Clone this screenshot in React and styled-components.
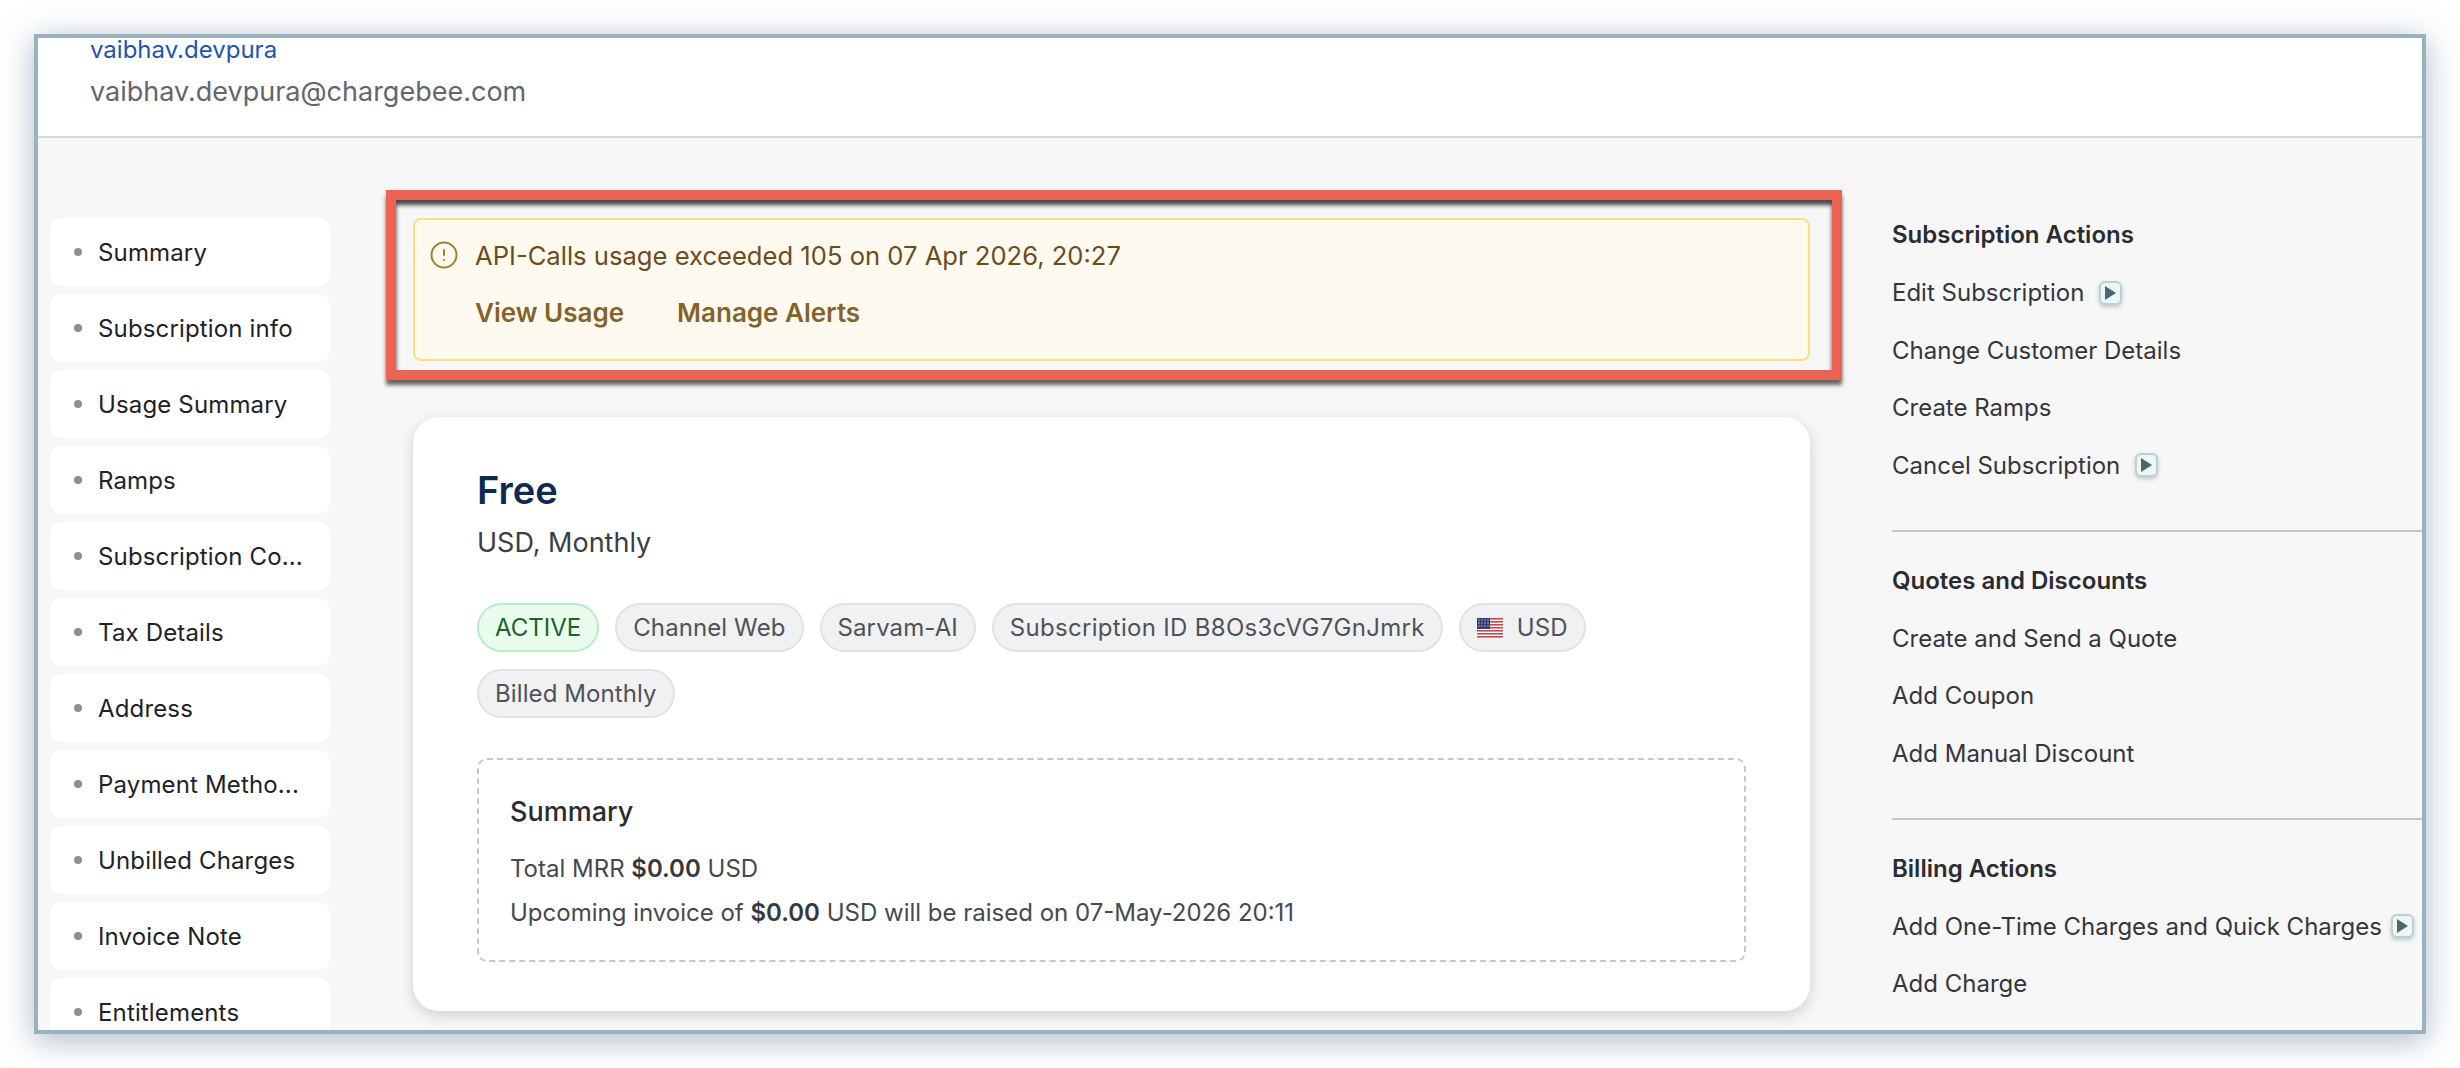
import React from 'react'
import styled, { createGlobalStyle } from 'styled-components'
import { CircleAlert } from 'lucide-react'

const Global = createGlobalStyle`
  html, body {
    margin: 0;
    background: #fff;
    font-family: Inter, "Noto Sans", sans-serif;
  }
  * { box-sizing: border-box; }
`

const Page = styled.div`
  width: 2460px;
  height: 1068px;
  padding: 34px;
  overflow: hidden;
`

const Frame = styled.div`
  width: 2392px;
  height: 1000px;
  border: 4px solid #9ab2c0;
  background: #f7f7f7;
  box-shadow: 0 6px 30px rgba(90, 120, 140, 0.5);
  overflow: hidden;
  display: flex;
  flex-direction: column;
`

const Header = styled.header`
  height: 100px;
  flex: none;
  background: #fff;
  border-bottom: 2px solid #d6d6d6;
  padding: 0 0 0 52px;
`

const UserName = styled.div`
  color: #1f55ab;
  font-size: 24px;
  line-height: 24px;
`

const Email = styled.div`
  color: #63666c;
  font-size: 27px;
  line-height: 32px;
  margin-top: 14px;
`

const Body = styled.div`
  flex: 1;
  min-height: 0;
  display: flex;
`

const Sidebar = styled.nav`
  width: 292px;
  flex: none;
  padding: 80px 0 0 12px;
  display: flex;
  flex-direction: column;
  gap: 8px;
`

const NavItem = styled.div`
  width: 280px;
  height: 68px;
  flex: none;
  background: #fff;
  border-radius: 12px;
  display: flex;
  align-items: center;
  padding-left: 24px;
  gap: 16px;
  font-size: 24px;
  letter-spacing: 0.15px;
  color: #202228;
  &::before {
    content: '';
    width: 8px;
    height: 8px;
    border-radius: 50%;
    background: #8d8f95;
  }
`

const Main = styled.main`
  width: 1480px;
  flex: none;
  padding: 80px 0 0 83px;
  display: flex;
  flex-direction: column;
  gap: 56px;
`

const Highlight = styled.div`
  position: relative;
  width: 1397px;
  flex: none;
`

const RedBox = styled.div`
  position: absolute;
  left: -27px;
  top: -28px;
  width: 1456px;
  height: 190px;
  border: 10px solid #ec6354;
  box-shadow: 0 5px 4px rgba(0, 0, 0, 0.6), inset 0 5px 4px rgba(0, 0, 0, 0.72);
`

const Alert = styled.div`
  height: 143px;
  background: #fefaef;
  border: 2px solid #fcdf7c;
  border-radius: 8px;
  padding: 17px 14px;
`

const AlertRow = styled.div`
  display: flex;
  align-items: center;
  gap: 16px;
  height: 36px;
  color: #6d4c1b;
  font-size: 25.6px;
  svg { color: #a07f2e; flex: none; }
`

const AlertLinks = styled.div`
  display: flex;
  gap: 53px;
  margin: 22px 0 0 46px;
  color: #84622a;
  font-size: 26px;
  font-weight: 600;
  line-height: 36px;
`

const Card = styled.section`
  width: 1397px;
  height: 594px;
  flex: none;
  background: #fff;
  border-radius: 26px;
  box-shadow: 0 4px 14px rgba(70, 70, 90, 0.22);
  padding: 49px 64px 0;
`

const Title = styled.h1`
  margin: 0;
  color: #0f2a4f;
  font-size: 38px;
  font-weight: 600;
  line-height: 48px;
`

const SubTitle = styled.div`
  margin-top: 11px;
  color: #3b3e44;
  font-size: 27px;
  line-height: 36px;
`

const Chips = styled.div`
  display: flex;
  flex-wrap: wrap;
  gap: 17px 16px;
  margin-top: 42px;
`

const Chip = styled.span`
  display: inline-flex;
  align-items: center;
  gap: 14px;
  height: 49px;
  padding: 0 16px;
  border-radius: 25px;
  font-size: 24px;
  letter-spacing: ${p => (p.$wide ? '0.3px' : p.$active ? '0' : '0.1px')};
  border: 2px solid ${p => (p.$active ? '#b5efc4' : '#e1e2e6')};
  background: ${p => (p.$active ? '#e9fcee' : '#f0f1f3')};
  color: ${p => (p.$active ? '#1f6128' : '#505257')};
`

const SummaryBox = styled.div`
  height: 204px;
  margin-top: 40px;
  border: 2px dashed #c6c6cc;
  border-radius: 10px;
  padding: 34px 31px 0;
`

const SummaryTitle = styled.div`
  color: #2a2c32;
  font-size: 27px;
  font-weight: 500;
  line-height: 36px;
  margin-bottom: 17px;
`

const SummaryLine = styled.div`
  color: #46484e;
  font-size: 24px;
  line-height: 44px;
  b { font-weight: 600; color: #36383e; }
`

const Aside = styled.aside`
  flex: 1;
  min-width: 0;
  padding: 72px 0 0 82px;
`

const Group = styled.div`
  padding-bottom: 35.5px;
  margin-bottom: 24px;
  border-bottom: ${p => (p.$last ? 'none' : '2px solid #c4c4ca')};
`

const GroupTitle = styled.div`
  color: #2a2c32;
  font-size: 24px;
  font-weight: 600;
  line-height: 50px;
  margin-bottom: 4px;
`

const Action = styled.div`
  display: flex;
  align-items: center;
  gap: ${p => (p.$tight ? '9px' : '15px')};
  color: #34363c;
  font-size: 24px;
  height: 57.5px;
  white-space: nowrap;
`

const PlayButton = styled.span`
  width: 23px;
  height: 24px;
  flex: none;
  display: inline-flex;
  align-items: center;
  justify-content: center;
  background: #eef5f5;
  border: 2px solid #bcd0d3;
  border-radius: 6px;
  box-shadow: 0 2px 4px rgba(60, 90, 100, 0.3);
`

const Play = () => (
  <PlayButton>
    <svg width="11" height="14" viewBox="0 0 11 14">
      <path d="M0 0 L11 7 L0 14 Z" fill="#456a70" />
    </svg>
  </PlayButton>
)

const Flag = () => (
  <svg width="26" height="20" viewBox="0 0 26 20">
    <rect width="26" height="20" fill="#fff" />
    {[0, 3, 6, 9, 12, 15, 18].map(y => (
      <rect key={y} y={y} width="26" height="1.6" fill="#bf4a50" />
    ))}
    <rect width="13" height="11" fill="#2f3f78" />
    {[2, 5, 8, 11].map(x =>
      [2, 5, 8].map(y => <circle key={`${x}-${y}`} cx={x} cy={y} r="0.7" fill="#c9cfe4" />)
    )}
  </svg>
)

const navItems = [
  'Summary', 'Subscription info', 'Usage Summary', 'Ramps', 'Subscription Co...', 'Tax Details',
  'Address', 'Payment Metho...', 'Unbilled Charges', 'Invoice Note', 'Entitlements',
]

const groups = [
  {
    title: 'Subscription Actions',
    items: [['Edit Subscription', true], ['Change Customer Details'], ['Create Ramps'], ['Cancel Subscription', true]],
  },
  {
    title: 'Quotes and Discounts',
    items: [['Create and Send a Quote'], ['Add Coupon'], ['Add Manual Discount']],
  },
  {
    title: 'Billing Actions',
    last: true,
    items: [['Add One-Time Charges and Quick Charges', true, true], ['Add Charge']],
  },
]

export default function App() {
  return (
    <Page>
      <Global />
      <Frame>
        <Header>
          <UserName>vaibhav.devpura</UserName>
          <Email>vaibhav.devpura@chargebee.com</Email>
        </Header>
        <Body>
          <Sidebar>
            {navItems.map(item => <NavItem key={item}>{item}</NavItem>)}
          </Sidebar>
          <Main>
            <Highlight>
              <RedBox />
              <Alert>
                <AlertRow>
                  <CircleAlert size={30} strokeWidth={1.6} />
                  API-Calls usage exceeded 105 on 07 Apr 2026, 20:27
                </AlertRow>
                <AlertLinks>
                  <span>View Usage</span>
                  <span>Manage Alerts</span>
                </AlertLinks>
              </Alert>
            </Highlight>
            <Card>
              <Title>Free</Title>
              <SubTitle>USD, Monthly</SubTitle>
              <Chips>
                <Chip $active>ACTIVE</Chip>
                <Chip>Channel Web</Chip>
                <Chip>Sarvam-AI</Chip>
                <Chip $wide>Subscription ID B8Os3cVG7GnJmrk</Chip>
                <Chip><Flag />USD</Chip>
                <Chip>Billed Monthly</Chip>
              </Chips>
              <SummaryBox>
                <SummaryTitle>Summary</SummaryTitle>
                <SummaryLine>Total MRR <b>$0.00</b> USD</SummaryLine>
                <SummaryLine>Upcoming invoice of <b>$0.00</b> USD will be raised on 07-May-2026 20:11</SummaryLine>
              </SummaryBox>
            </Card>
          </Main>
          <Aside>
            {groups.map(group => (
              <Group key={group.title} $last={group.last}>
                <GroupTitle>{group.title}</GroupTitle>
                {group.items.map(([label, hasVideo, tight]) => (
                  <Action key={label} $tight={tight}>
                    {label}
                    {hasVideo && <Play />}
                  </Action>
                ))}
              </Group>
            ))}
          </Aside>
        </Body>
      </Frame>
    </Page>
  )
}
